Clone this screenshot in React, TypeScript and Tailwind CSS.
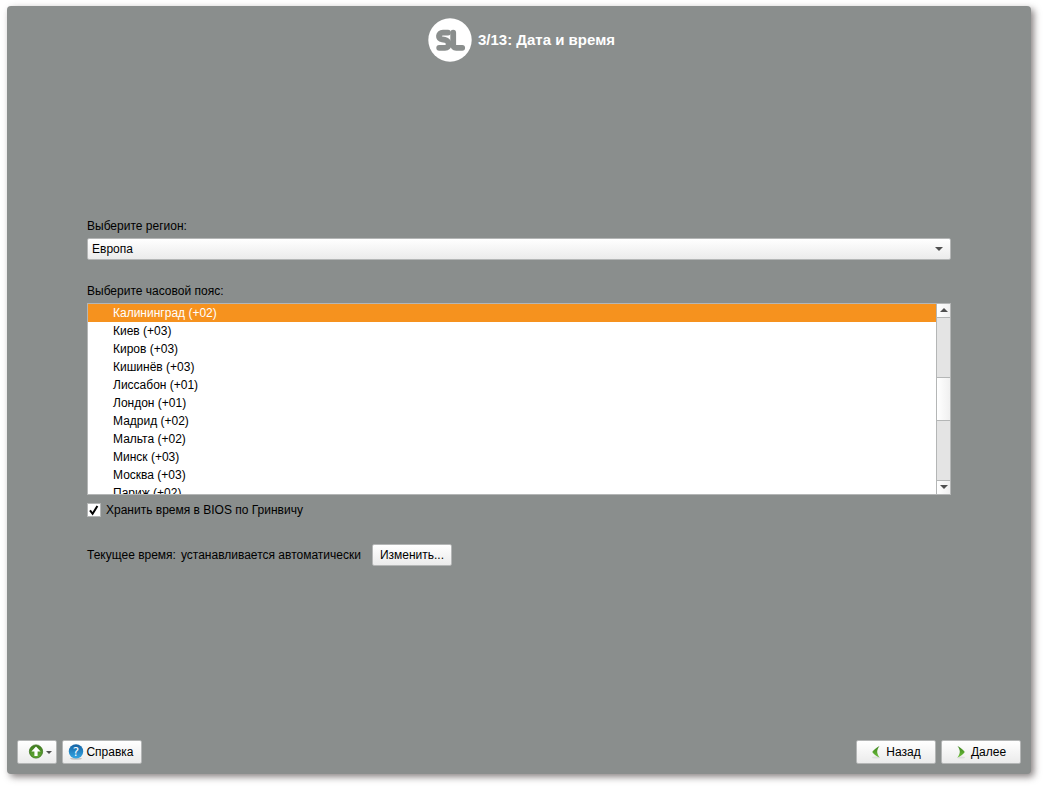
import { useRef, useState } from "react";

const zones = [
  "Калининград (+02)",
  "Киев (+03)",
  "Киров (+03)",
  "Кишинёв (+03)",
  "Лиссабон (+01)",
  "Лондон (+01)",
  "Мадрид (+02)",
  "Мальта (+02)",
  "Минск (+03)",
  "Москва (+03)",
  "Париж (+02)",
];

const buttonClass =
  "flex items-center justify-center rounded-[2px] border border-[#b4b6b6] bg-linear-to-b from-white to-[#ebebeb] text-[12px] leading-4 text-black";

function Caret({ up = false }: { up?: boolean }) {
  return (
    <svg viewBox="0 0 8 4" className="h-1 w-2" aria-hidden="true">
      <path d={up ? "M0 4 4 0 8 4Z" : "M0 0 8 0 4 4Z"} fill="#505050" />
    </svg>
  );
}

function Logo() {
  return (
    <svg viewBox="0 0 44 44" className="size-11" aria-hidden="true">
      <circle cx="22" cy="22" r="21.7" fill="#fff" />
      <g fill="none" stroke="#8a8e8d" strokeWidth="5.8" strokeLinecap="round" strokeLinejoin="round">
        <path d="M20 14.6H15C9.8 14.6 9.8 21 14 21.4L17 21.9C22 22.7 22 29.8 17 29.8H11.2" />
        <path d="M25.2 14.6V26.6C25.2 28.8 26.2 29.8 28.2 29.8H34.2" />
      </g>
    </svg>
  );
}

function UpIcon() {
  return (
    <svg viewBox="0 0 16 16" className="size-4" aria-hidden="true">
      <defs>
        <linearGradient id="up-fill" x1="0" y1="0" x2="0" y2="1">
          <stop offset="0" stopColor="#3d7a1c" />
          <stop offset="1" stopColor="#62ab35" />
        </linearGradient>
      </defs>
      <circle cx="8" cy="7.5" r="6.6" fill="url(#up-fill)" stroke="#38701b" strokeWidth="0.8" />
      <path d="M8 2.4 12.6 7.4H9.6V12H6.4V7.4H3.4Z" fill="#fff" />
    </svg>
  );
}

function HelpIcon() {
  return (
    <svg viewBox="0 0 16 16" className="size-4" aria-hidden="true">
      <defs>
        <linearGradient id="help-fill" x1="0" y1="0" x2="0" y2="1">
          <stop offset="0" stopColor="#1562a3" />
          <stop offset="1" stopColor="#35a7e4" />
        </linearGradient>
      </defs>
      <ellipse cx="8" cy="14.6" rx="6" ry="1.2" fill="#c4c4c4" />
      <circle cx="8" cy="7.4" r="7.2" fill="url(#help-fill)" />
      <text x="8" y="12" textAnchor="middle" fontFamily="DejaVu Sans, sans-serif" fontSize="12" fill="#fff">
        ?
      </text>
    </svg>
  );
}

function ArrowIcon({ back = false }: { back?: boolean }) {
  return (
    <svg viewBox="0 0 16 16" className="size-4" aria-hidden="true">
      <defs>
        <linearGradient id={back ? "back-fill" : "next-fill"} x1="0" y1="0" x2="0" y2="1">
          <stop offset="0" stopColor="#3f8420" />
          <stop offset="1" stopColor="#6cc03a" />
        </linearGradient>
      </defs>
      <ellipse cx="8" cy="13.6" rx="4" ry="1" fill="#dedede" />
      <path
        d={
          back
            ? "M11.5 2C8.5 3.5 6 5.5 4.2 8 6 10.5 8.5 12.2 11.5 13.6 10 11.5 9.2 9.5 9.2 7.8 9.2 6 10 4 11.5 2Z"
            : "M4.5 2C7.5 3.5 10 5.5 11.8 8 10 10.5 7.5 12.2 4.5 13.6 6 11.5 6.8 9.5 6.8 7.8 6.8 6 6 4 4.5 2Z"
        }
        fill={back ? "url(#back-fill)" : "url(#next-fill)"}
      />
    </svg>
  );
}

export default function App() {
  const [zone, setZone] = useState(zones[0]);
  const [utc, setUtc] = useState(true);
  const list = useRef<HTMLSelectElement>(null);
  const scroll = (by: number) => list.current?.scrollBy({ top: by });

  return (
    <div className="flex min-h-screen flex-col bg-white pt-[6px] pr-[13px] pb-[14px] pl-[7px] font-['Liberation_Sans',Arial,sans-serif] text-[12px] leading-4 text-black">
      <div className="flex flex-1 flex-col rounded-[4px] bg-[#8a8e8d] shadow-[3px_3px_7px_0px_rgba(60,50,50,0.6)]">
        <header className="flex items-center justify-center gap-[6px] pt-3 pl-[5px]">
          <Logo />
          <h1 className="text-[15px] leading-5 font-bold text-white">3/13: Дата и время</h1>
        </header>

        <main className="flex flex-1 flex-col justify-center px-20 pb-[18px]">
          <label htmlFor="region">Выберите регион:</label>
          <div className="relative mt-1">
            <select
              id="region"
              className="block h-[22px] w-full appearance-none rounded-[2px] border border-[#b4b6b6] bg-linear-to-b from-white to-[#ebebeb] px-1 text-[12px] leading-4"
            >
              <option>Европа</option>
            </select>
            <span className="pointer-events-none absolute inset-y-0 right-2 flex items-center">
              <Caret />
            </span>
          </div>

          <label htmlFor="zone" className="mt-[23px]">Выберите часовой пояс:</label>
          <div className="mt-1 flex h-48 border border-[#b4b6b6] bg-white">
            <select
              id="zone"
              ref={list}
              size={10}
              value={zone}
              onChange={(e) => setZone(e.target.value)}
              className="block h-full min-w-0 flex-1 overflow-y-auto bg-white p-0 text-[12px] outline-none [scrollbar-width:none]"
            >
              {zones.map((z) => (
                <option
                  key={z}
                  className="h-[18px] p-0 pt-[2px] pl-[25px] checked:bg-linear-to-b checked:from-[#f6921e] checked:to-[#f6921e] checked:[-webkit-text-fill-color:#fff]"
                >
                  {z}
                </option>
              ))}
            </select>
            <div className="flex w-[14px] flex-col border-l border-[#b4b6b6] bg-[#e4e4e4]">
              <button type="button" aria-label="Вверх" onClick={() => scroll(-18)} className="flex h-[14px] items-center justify-center border-b border-[#b4b6b6] bg-linear-to-r from-white to-[#f0f0f0] pb-[2px]">
                <Caret up />
              </button>
              <div className="flex-1" />
              <div className="h-11 border-y border-[#b4b6b6] bg-linear-to-r from-white to-[#f0f0f0]" />
              <div className="flex-1" />
              <button type="button" aria-label="Вниз" onClick={() => scroll(18)} className="flex h-[14px] items-center justify-center border-t border-[#b4b6b6] bg-linear-to-r from-white to-[#f0f0f0] pb-[2px]">
                <Caret />
              </button>
            </div>
          </div>

          <label className="mt-[7px] flex items-center gap-[5px]">
            <span className="grid size-[14px] place-items-center">
              <input
                type="checkbox"
                checked={utc}
                onChange={(e) => setUtc(e.target.checked)}
                className="col-start-1 row-start-1 size-[14px] appearance-none border border-[#b4b6b6] bg-white"
              />
              {utc && (
                <svg viewBox="0 0 14 14" className="pointer-events-none col-start-1 row-start-1 size-[14px]" aria-hidden="true">
                  <path d="M3 7.4 5.6 10.8 10.4 3" fill="none" stroke="#000" strokeWidth="2" />
                </svg>
              )}
            </span>
            Хранить время в BIOS по Гринвичу
          </label>

          <div className="mt-[26px] flex items-center gap-[5px]">
            <span>Текущее время:</span>
            <span className="min-w-[186px]">устанавливается автоматически</span>
            <button type="button" className={`${buttonClass} h-[22px] w-20`}>Изменить...</button>
          </div>
        </main>

        <footer className="flex justify-between px-[10px] pb-[10px]">
          <div className="flex gap-[5px]">
            <button type="button" aria-label="Меню" className={`${buttonClass} h-6 w-10 gap-[2px] pl-[5px]`}>
              <UpIcon />
              <svg viewBox="0 0 6 3" className="h-[3px] w-[6px]" aria-hidden="true">
                <path d="M0 0H6L3 3Z" fill="#505050" />
              </svg>
            </button>
            <button type="button" className={`${buttonClass} h-6 w-20 gap-[2px] pr-[2px]`}>
              <HelpIcon />
              Справка
            </button>
          </div>
          <div className="flex gap-[5px]">
            <button type="button" className={`${buttonClass} h-6 w-20 gap-[2px] pr-[3px]`}>
              <ArrowIcon back />
              Назад
            </button>
            <button type="button" className={`${buttonClass} h-6 w-20 gap-[2px] pr-[3px]`}>
              <ArrowIcon />
              Далее
            </button>
          </div>
        </footer>
      </div>
    </div>
  );
}
